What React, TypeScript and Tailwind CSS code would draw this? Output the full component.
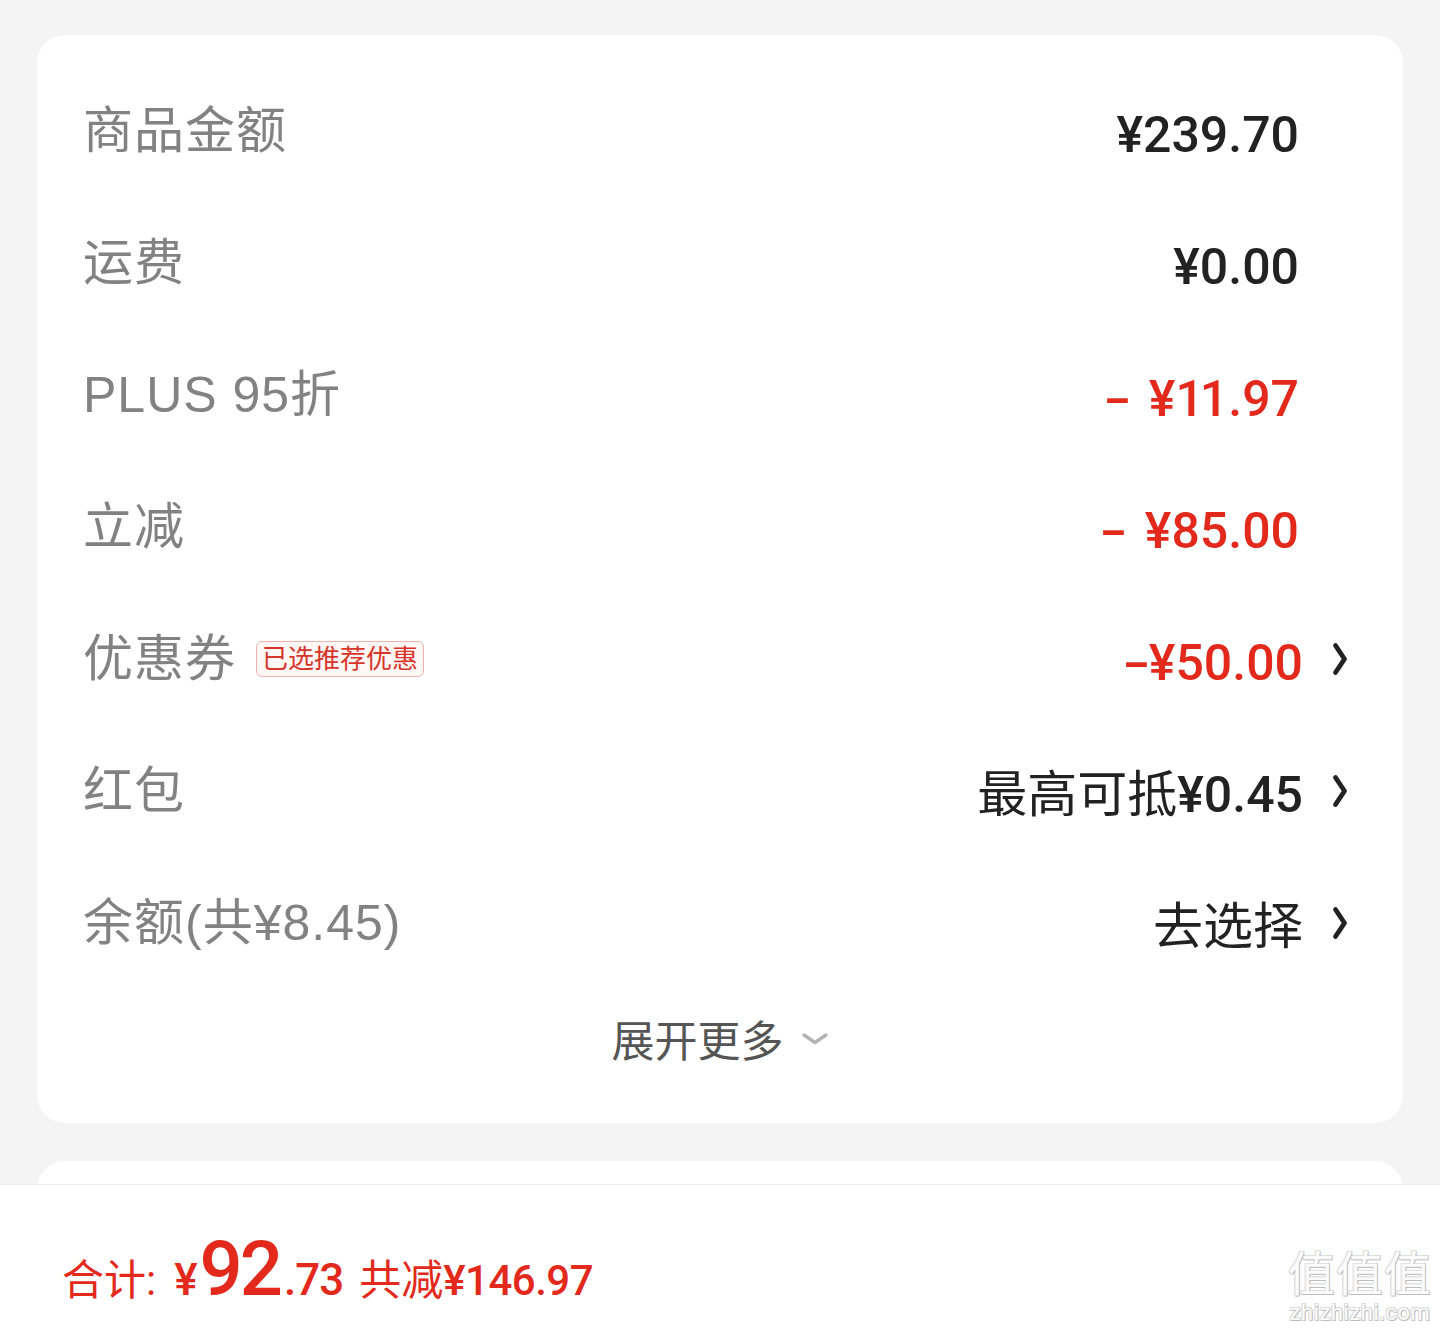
import React from "react";

const RED = "text-[#e2291c]";

function ArrowRight() {
  return (
    <svg width="16" height="34" viewBox="0 0 16 34" className="block">
      <polyline
        points="3.5,3.5 12.5,17 3.5,30.5"
        fill="none"
        stroke="#222222"
        strokeWidth="4.8"
        strokeLinecap="round"
        strokeLinejoin="round"
      />
    </svg>
  );
}

function ChevronDown() {
  return (
    <svg width="28" height="14" viewBox="0 0 28 14" className="block">
      <polyline
        points="3,3 14,10.5 25,3"
        fill="none"
        stroke="#b3b3b3"
        strokeWidth="3.4"
        strokeLinecap="round"
        strokeLinejoin="round"
      />
    </svg>
  );
}

function Dash({ gap }: { gap: string }) {
  return <span className={`inline-block scale-x-[1.6] ${gap}`}>-</span>;
}

type Row = {
  label: string;
  badge?: string;
  value: React.ReactNode;
  red?: boolean;
  arrow?: boolean;
};

const rows: Row[] = [
  { label: "商品金额", value: "¥239.70" },
  { label: "运费", value: "¥0.00" },
  {
    label: "PLUS 95折",
    value: (
      <>
        <Dash gap="mr-[10px]" /> ¥<span className="tracking-[-4px]">11</span>
        <span className="ml-[4px]">.97</span>
      </>
    ),
    red: true,
  },
  {
    label: "立减",
    value: (
      <>
        <Dash gap="mr-[10px]" /> ¥85.00
      </>
    ),
    red: true,
  },
  {
    label: "优惠券",
    badge: "已选推荐优惠",
    value: (
      <>
        <Dash gap="mr-[4px]" />¥50.00
      </>
    ),
    red: true,
    arrow: true,
  },
  {
    label: "红包",
    value: (
      <>
        <span className="font-normal">最高可抵</span>¥0.45
      </>
    ),
    arrow: true,
  },
  { label: "余额(共¥8.45)", value: <span className="font-normal">去选择</span>, arrow: true },
];

export default function App() {
  return (
    <div
      className="relative flex h-[1332px] w-[1440px] flex-col overflow-hidden bg-[#f4f4f4]"
      style={{ fontFamily: "Roboto, 'Noto Sans CJK SC', sans-serif" }}
    >
      <div className="flex flex-1 flex-col overflow-hidden px-[37px] pt-[35px]">
        <div className="flex flex-col rounded-[28px] bg-white pt-[30px] pb-[28px]">
          {rows.map((r, i) => (
            <div key={i} className="flex h-[132px] items-center pl-[46px] pr-[55px]">
              <div className="flex flex-1 items-center">
                <span className="font-['Liberation_Sans','Noto_Sans_CJK_SC',sans-serif] text-[50px] leading-none tracking-[1px] text-[#828282]">
                  {r.label}
                </span>
                {r.badge && (
                  <span className="ml-[20px] flex h-[36px] items-center rounded-[6px] border border-[#ebb3ab] bg-[#fff7f5] px-[5px] text-[26px] leading-none text-[#d6352a]">
                    {r.badge}
                  </span>
                )}
              </div>
              <div className="flex items-center">
                <span
                  className={`mt-[8px] text-[50px] font-medium leading-none ${r.red ? RED : "text-[#222222]"}`}
                >
                  {r.value}
                </span>
                {r.arrow ? (
                  <span className="ml-[29px]">
                    <ArrowRight />
                  </span>
                ) : (
                  <span className="w-[49px]" />
                )}
              </div>
            </div>
          ))}
          <div className="flex h-[106px] items-center justify-center">
            <span className="text-[43px] leading-none text-[#555555]">展开更多</span>
            <span className="ml-[17px] mt-[-6px]">
              <ChevronDown />
            </span>
          </div>
        </div>
        <div className="mt-[38px] h-[40px] shrink-0 rounded-t-[28px] bg-white" />
      </div>
      <div className="relative h-[148px] shrink-0 border-t border-[#ededed] bg-white">
        <div className={`flex items-baseline pl-[62px] pt-[46px] ${RED}`}>
          <span className="text-[42px] leading-none">合计:</span>
          <span className="ml-[18px] text-[44px] font-medium leading-none">¥</span>
          <span className="ml-[2px] text-[76px] font-medium leading-none tracking-[-3px]">92</span>
          <span className="ml-[4px] text-[44px] font-medium leading-none tracking-[-1px]">.73</span>
          <span className="ml-[16px] text-[42px] leading-none">共减</span>
          <span className="text-[42px] font-medium leading-none tracking-[-0.5px]">¥146.97</span>
        </div>
        <div className="absolute right-[8px] bottom-[8px] flex flex-col items-center">
          <span className="text-[47px] leading-none tracking-[1px] text-[#fbfbfb] [text-shadow:1px_1px_0_#bdbdbd,-1px_-1px_0_#dedede,1px_-1px_0_#d6d6d6,-1px_1px_0_#d6d6d6]">
            值值值
          </span>
          <span className="mt-[4px] text-[22px] leading-none tracking-[0.5px] text-[#fbfbfb] [text-shadow:1px_1px_0_#bdbdbd,-1px_-1px_0_#dedede,1px_-1px_0_#d6d6d6,-1px_1px_0_#d6d6d6]">
            zhizhizhi.com
          </span>
        </div>
      </div>
    </div>
  );
}
